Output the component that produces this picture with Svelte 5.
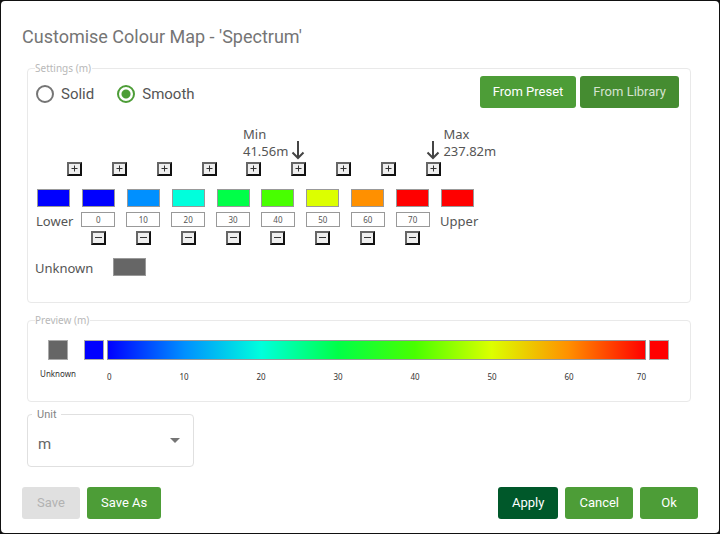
<script>
  let mode = $state('smooth');
  let unit = $state('m');

  let stops = $state([
    { value: '0', color: '#0000ff' },
    { value: '10', color: '#0090ff' },
    { value: '20', color: '#00ffdc' },
    { value: '30', color: '#00ff48' },
    { value: '40', color: '#48ff00' },
    { value: '50', color: '#dcff00' },
    { value: '60', color: '#ff9000' },
    { value: '70', color: '#ff0000' }
  ]);
  const lower = '#0000ff';
  const upper = '#ff0000';
  const unknown = '#666666';

  const gradient = $derived(`linear-gradient(to right, ${stops.map((s) => s.color).join(', ')})`);
</script>

{#snippet arrow()}
  <svg class="arrow" viewBox="0 0 14 20" aria-hidden="true">
    <path d="M7 1v17M1.5 12.5 7 18l5.500-5.500" />
  </svg>
{/snippet}

<main class="dialog">
  <h1>Customise Colour Map - 'Spectrum'</h1>

  <div class="content">
    <fieldset class="settings">
      <legend>Settings (m)</legend>
      <div class="toolbar">
        <div class="radios">
          <label><input type="radio" name="mode" value="solid" bind:group={mode} />Solid</label>
          <label><input type="radio" name="mode" value="smooth" bind:group={mode} />Smooth</label>
        </div>
        <div class="actions tight">
          <button class="btn" type="button">From Preset</button>
          <button class="btn pressed" type="button">From Library</button>
        </div>
      </div>

      <div class="markers">
        <div class="marker"><span>Min<br />41.56m</span>{@render arrow()}</div>
        <div class="marker">{@render arrow()}<span>Max<br />237.82m</span></div>
      </div>

      <div class="inserts">
        {#each { length: 9 } as _, i}
          <button class="step" type="button" aria-label="Insert stop {i + 1}">
            <svg viewBox="0 0 9 9" aria-hidden="true"><path d="M1.500 4.500h6M4.500 1.500v6" /></svg>
          </button>
        {/each}
      </div>

      <div class="stops">
        <div class="stop">
          <button class="swatch" type="button" aria-label="Lower colour" style:background={lower}></button>
          <span class="end">Lower</span>
        </div>
        {#each stops as stop, i}
          <div class="stop">
            <button class="swatch" type="button" aria-label="Colour {i + 1}" style:background={stop.color}></button>
            <input class="value" type="text" aria-label="Value {i + 1}" bind:value={stop.value} />
            <button class="step" type="button" aria-label="Remove stop {i + 1}">
              <svg viewBox="0 0 9 9" aria-hidden="true"><path d="M1 4.500h7" /></svg>
            </button>
          </div>
        {/each}
        <div class="stop">
          <button class="swatch" type="button" aria-label="Upper colour" style:background={upper}></button>
          <span class="end">Upper</span>
        </div>
      </div>

      <div class="unknown">
        <span>Unknown</span>
        <button class="swatch" type="button" aria-label="Unknown colour" style:background={unknown}></button>
      </div>
    </fieldset>

    <fieldset class="preview">
      <legend>Preview (m)</legend>
      <div class="unknown-key">
        <div class="block" style:background={unknown}></div>
        <span>Unknown</span>
      </div>
      <div class="block" style:background={lower}></div>
      <div class="scale">
        <div class="bar" style:background={gradient}></div>
        <div class="ticks">
          {#each stops as stop}<span>{stop.value}</span>{/each}
        </div>
      </div>
      <div class="block" style:background={upper}></div>
    </fieldset>

    <div class="select">
      <label for="unit">Unit</label>
      <select id="unit" bind:value={unit}>
        <option value="m">m</option>
        <option value="ft">ft</option>
      </select>
      <svg viewBox="0 0 10 5" aria-hidden="true"><path d="M0 0h10L5 5z" /></svg>
    </div>
  </div>

  <footer>
    <div class="actions">
      <button class="btn" type="button" disabled>Save</button>
      <button class="btn" type="button">Save As</button>
    </div>
    <div class="actions">
      <button class="btn dark" type="button">Apply</button>
      <button class="btn" type="button">Cancel</button>
      <button class="btn" type="button">Ok</button>
    </div>
  </footer>
</main>

<style>
  :global(body) {
    background: #111;
  }
  * {
    box-sizing: border-box;
  }
  .dialog {
    margin: 1px;
    padding: 24px 21px 14px;
    border-radius: 4px;
    background: #fff;
    color: #555;
    font-family: 'Noto Sans', 'Open Sans', sans-serif;
  }
  h1 {
    margin: 0;
    font: 400 18px/24px Roboto, sans-serif;
    color: #757575;
  }
  .content {
    display: flex;
    flex-direction: column;
    padding: 11px 7px 0 5px;
  }
  fieldset {
    min-width: 0;
    margin: 0;
    border: 1px solid #e9e9e9;
    border-radius: 4px;
  }
  legend {
    padding: 0 1px 0 0;
    font-size: 10px;
    line-height: 16px;
    color: #b8b8b8;
  }
  .settings {
    padding: 0 11px 24px 7px;
  }
  .toolbar {
    display: flex;
    justify-content: space-between;
    align-items: center;
  }
  .radios {
    display: flex;
    gap: 23px;
    padding: 3px 0 0 1px;
  }
  .radios label {
    display: flex;
    align-items: center;
    gap: 7px;
    font: 400 15px/20px Roboto, sans-serif;
  }
  .radios input {
    appearance: none;
    width: 18px;
    height: 18px;
    margin: 0;
    border: 2px solid #757575;
    border-radius: 50%;
  }
  .radios input:checked {
    border-color: #4d9d37;
    background: radial-gradient(circle, #4d9d37 4px, transparent 5px);
  }
  .actions {
    display: flex;
    gap: 7px;
  }
  .actions.tight {
    gap: 4px;
  }
  .btn {
    min-width: 58px;
    height: 32px;
    padding: 0 14px;
    border: 0;
    border-radius: 3px;
    background: #4d9d37;
    color: #fff;
    font: 400 13px/32px Roboto, sans-serif;
  }
  .tight .btn {
    padding: 0 13px;
  }
  .btn.pressed {
    background: #458c31;
    color: #d5e3d0;
  }
  .btn.dark {
    background: #00582a;
  }
  .btn:disabled {
    background: #e0e0e0;
    color: #b2b2b2;
  }
  .markers {
    display: flex;
    gap: 121px;
    margin-top: 18px;
    padding-left: 208px;
    font-size: 13px;
    line-height: 17px;
  }
  .marker {
    display: flex;
    align-items: flex-end;
    gap: 3px;
  }
  .arrow {
    width: 14px;
    height: 20px;
    fill: none;
    stroke: #444;
    stroke-width: 2;
  }
  .inserts {
    display: grid;
    grid-template-columns: repeat(9, 1fr);
    justify-items: center;
    width: 404px;
    margin: 2px 0 0 17px;
  }
  .step {
    display: flex;
    width: 15px;
    height: 14px;
    padding: 0 1px;
    border: 2px solid;
    border-color: #666 #111 #111 #666;
    background: #efefef;
  }
  .step svg {
    width: 9px;
    height: 9px;
    fill: none;
    stroke: #333;
    stroke-width: 1;
  }
  .stops {
    display: grid;
    grid-template-columns: repeat(10, 1fr);
    width: 449px;
    margin: 13px 0 0 -4px;
  }
  .stop {
    display: flex;
    flex-direction: column;
    align-items: center;
  }
  .swatch {
    width: 33px;
    height: 18px;
    padding: 0;
    border: 1px solid #999;
  }
  .value {
    width: 34px;
    height: 15px;
    margin: 5px 0 4px;
    padding: 0;
    border: 1px solid #999;
    background: #fff;
    color: #555;
    font: 8px/13px 'Noto Sans', 'Open Sans', sans-serif;
    text-align: center;
  }
  .end {
    align-self: flex-start;
    margin: 4px 0 0 5px;
    font-size: 13px;
    line-height: 20px;
  }
  .unknown {
    display: flex;
    gap: 20px;
    margin-top: 13px;
    font-size: 13px;
    line-height: 20px;
  }
  .preview {
    display: flex;
    gap: 3px;
    margin-top: 9px;
    padding: 12px 21px 18px 7px;
  }
  .unknown-key {
    display: flex;
    flex-direction: column;
    align-items: center;
    gap: 7px;
    width: 46px;
    font-size: 8px;
    line-height: 13px;
    color: #333;
  }
  .block {
    width: 20px;
    height: 20px;
    border: 1px solid #aaa;
  }
  .scale {
    flex: 1;
  }
  .bar {
    height: 20px;
    border: 1px solid #999;
  }
  .ticks {
    display: grid;
    grid-template-columns: 1fr repeat(6, 2fr) 1fr;
    margin-top: 10px;
    font-size: 8px;
    line-height: 13px;
    text-align: center;
    color: #333;
  }
  .ticks span:first-child {
    text-align: left;
  }
  .ticks span:last-child {
    text-align: right;
  }
  .select {
    position: relative;
    width: 167px;
    margin-top: 12px;
  }
  .select label {
    position: absolute;
    top: -6px;
    left: 5px;
    padding: 0 5px;
    background: #fff;
    color: #858585;
    font: 11px/14px Roboto, sans-serif;
  }
  select {
    appearance: none;
    display: block;
    width: 100%;
    height: 53px;
    padding: 6px 10px 0;
    border: 1px solid #e0e0e0;
    border-radius: 4px;
    background: #fff;
    color: #666;
    font: 15px/20px Roboto, sans-serif;
  }
  .select svg {
    position: absolute;
    top: 24px;
    right: 14px;
    width: 10px;
    height: 5px;
    fill: #757575;
    pointer-events: none;
  }
  footer {
    display: flex;
    justify-content: space-between;
    margin-top: 20px;
  }
</style>
